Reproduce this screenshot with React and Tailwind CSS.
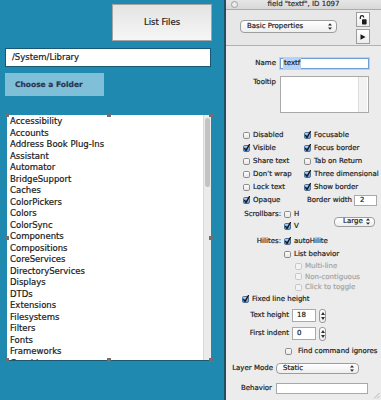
import React from "react";

const items = [
  "Accessibility", "Accounts", "Address Book Plug-Ins", "Assistant", "Automator",
  "BridgeSupport", "Caches", "ColorPickers", "Colors", "ColorSync", "Components",
  "Compositions", "CoreServices", "DirectoryServices", "Displays", "DTDs",
  "Extensions", "Filesystems", "Filters", "Fonts", "Frameworks", "Graphics",
];

function Box({ checked, disabled }) {
  if (checked)
    return (
      <svg width="7" height="7" viewBox="0 0 7 7" className="shrink-0 overflow-visible">
        <defs>
          <linearGradient id="cbg" x1="0" y1="0" x2="0" y2="1">
            <stop offset="0" stopColor="#c4dcf6" />
            <stop offset="1" stopColor="#4a8fdc" />
          </linearGradient>
        </defs>
        <rect x="0.5" y="0.5" width="6" height="6" rx="1.3" fill="url(#cbg)" stroke="#4d6f98" />
        <path d="M1.6 3.4 L3 5.4 L6.4 -0.3" fill="none" stroke="#141414" strokeWidth="1.4" strokeLinecap="round" strokeLinejoin="round" />
      </svg>
    );
  return (
    <svg width="7" height="7" viewBox="0 0 7 7" className="shrink-0">
      <defs>
        <linearGradient id="cbw" x1="0" y1="0" x2="0" y2="1">
          <stop offset="0" stopColor="#ffffff" />
          <stop offset="1" stopColor="#e4e4e4" />
        </linearGradient>
      </defs>
      <rect x="0.5" y="0.5" width="6" height="6" rx="1.3" fill={disabled ? "#f3f3f3" : "url(#cbw)"} stroke={disabled ? "#c8c8c8" : "#8c8c8c"} />
    </svg>
  );
}

function Check({ checked, disabled, label, gap = "gap-[3px]" }) {
  return (
    <div className={`flex items-center ${gap}`}>
      <Box checked={checked} disabled={disabled} />
      <span className={disabled ? "text-[#a6a6a6]" : "text-[#1c1c1c]"}>{label}</span>
    </div>
  );
}

function Arrows() {
  return (
    <svg width="4" height="7" viewBox="0 0 4 7" className="shrink-0">
      <path d="M0 2.6 L2 0.3 L4 2.6 Z" fill="#2a2a2a" />
      <path d="M0 4.4 L2 6.7 L4 4.4 Z" fill="#2a2a2a" />
    </svg>
  );
}

function Stepper() {
  return (
    <div className="w-[7px] h-[14px] rounded-[3px] border border-[#9a9a9a] bg-gradient-to-b from-white to-[#ececec] flex flex-col items-center justify-around py-[1px]">
      <svg width="4" height="3" viewBox="0 0 4 3"><path d="M0 3 L2 0 L4 3 Z" fill="#333" /></svg>
      <svg width="4" height="3" viewBox="0 0 4 3"><path d="M0 0 L2 3 L4 0 Z" fill="#333" /></svg>
    </div>
  );
}

function Handle({ className }) {
  return <div className={`absolute w-[4px] h-[4px] bg-[#707070] ${className}`} />;
}

export default function App() {
  return (
    <div className="w-[381px] h-[400px] flex overflow-hidden font-['DejaVu_Sans',sans-serif] [-webkit-text-stroke:0.2px_currentColor]">
      {/* Left panel */}
      <div className="w-[224px] h-full bg-[#2089b0] flex flex-col text-[8.5px] text-[#1a1a1a]">
        <div className="pt-[4px] pl-[112px]">
          <div className="w-[100px] h-[37px] border border-[#a4a4a4] bg-gradient-to-b from-[#e4e4e4] to-[#f6f6f6] flex items-center justify-center text-[#222]">
            List Files
          </div>
        </div>
        <div className="mt-[7px] ml-[5px] w-[206px] h-[19px] bg-white border border-[#195873] flex items-center pl-[6px]">
          /System/Library
        </div>
        <div className="mt-[6px] ml-[5px] w-[99px] h-[23px] bg-[#7fc0d8] flex items-center pl-[10px] font-bold text-[7.5px] text-[#2a3553]">
          Choose a Folder
        </div>
        <div className="relative mt-[19px] ml-[7px] w-[204px] h-[246px] bg-white border-b border-[#1d5870] flex">
          <div className="flex-1 overflow-hidden pl-[3px] pt-[1px] leading-[11.5px]">
            {items.map((t) => (
              <div key={t} className="whitespace-nowrap">{t}</div>
            ))}
          </div>
          <div className="w-[8px] h-full bg-[#ebebeb] border-l border-[#d9d9d9] flex justify-center pt-[3px]">
            <div className="w-[5px] h-[69px] rounded-[3px] bg-[#c3c3c3]" />
          </div>
          <Handle className="left-[-2px] top-[-2px]" />
          <Handle className="left-[100px] top-[-2px]" />
          <Handle className="right-[-2px] top-[-2px]" />
          <Handle className="left-[-2px] top-[121px]" />
          <Handle className="right-[-2px] top-[121px]" />
          <Handle className="left-[-2px] bottom-[-2px]" />
          <Handle className="left-[100px] bottom-[-2px]" />
          <Handle className="right-[-2px] bottom-[-2px]" />
        </div>
      </div>

      {/* Divider */}
      <div className="w-[2px] h-full bg-[#244f61]" />

      {/* Right panel */}
      <div className="relative flex-1 h-full bg-[#ececec] flex flex-col text-[7px] text-[#1c1c1c]">
        {/* Title bar */}
        <div className="h-[10px] bg-gradient-to-b from-[#e6e6e6] to-[#d8d8d8] border-b border-[#ababab] flex items-center relative">
          <div className="ml-[5px] w-[7px] h-[7px] rounded-full border border-[#a0a0a0] bg-[#ececec]" />
          <div className="absolute inset-x-0 top-0 h-[9px] flex items-center justify-center text-[#2e2e2e] leading-none">
            field "textf", ID 1097
          </div>
        </div>
        {/* Toolbar */}
        <div className="h-[36px] bg-[#e7e7e7] border-b border-[#b2b2b2] flex pl-[14px]">
          <div className="mt-[10px] w-[97px] h-[13px] rounded-[4px] border border-[#9d9d9d] bg-gradient-to-b from-white to-[#eeeeee] flex items-center pl-[6px] pr-[4px] justify-between">
            <span>Basic Properties</span>
            <Arrows />
          </div>
          <div className="ml-auto mr-[11px] flex flex-col gap-[2px] pt-[2px]">
            <div className="w-[14px] h-[15px] border border-[#9d9d9d] bg-gradient-to-b from-white to-[#ededed] flex items-center justify-center">
              <svg width="8" height="10" viewBox="0 0 8 10">
                <path d="M1.3 4 V2.4 A1.7 1.7 0 0 1 4.7 2.4" fill="none" stroke="#1a1a1a" strokeWidth="1.2" />
                <rect x="3" y="4.3" width="4.6" height="5.2" rx="0.8" fill="#1a1a1a" />
              </svg>
            </div>
            <div className="w-[14px] h-[15px] border border-[#9d9d9d] bg-gradient-to-b from-white to-[#ededed] flex items-center justify-center">
              <svg width="6" height="6" viewBox="0 0 6 6">
                <path d="M0.5 0.3 L5.6 3 L0.5 5.7 Z" fill="#1a1a1a" />
              </svg>
            </div>
          </div>
        </div>

        {/* Content */}
        <div className="flex flex-col">
          <div className="mt-[12px] h-[11px] flex items-center">
            <div className="w-[50px] text-right">Name</div>
            <div className="ml-[4px] w-[89px] h-[11px] bg-white border border-[#6f9ed8] shadow-[0_0_0_1px_#b9d3f1] flex items-center pl-[2px]">
              <span className="bg-[#b4d3fb] px-[1px]">textf</span>
            </div>
          </div>
          <div className="mt-[7px] h-[37px] flex items-start">
            <div className="w-[50px] text-right pt-[1px]">Tooltip</div>
            <div className="ml-[4px] w-[89px] h-[37px] bg-white border border-[#a9a9a9] flex justify-end">
              <div className="w-[9px] h-full bg-[#f2f2f2] border-l border-[#dedede] mr-[1px]" />
            </div>
          </div>

          <div className="mt-[16px] flex flex-col pl-[17px]">
            {[
              [["Disabled", false], ["Focusable", true]],
              [["Visible", true], ["Focus border", true]],
              [["Share text", false], ["Tab on Return", false]],
              [["Don’t wrap", false], ["Three dimensional", true]],
              [["Lock text", false], ["Show border", true]],
            ].map(([a, b]) => (
              <div key={a[0]} className="h-[13px] flex items-center">
                <div className="w-[61px]"><Check label={a[0]} checked={a[1]} /></div>
                <Check label={b[0]} checked={b[1]} />
              </div>
            ))}
            <div className="h-[13px] flex items-center">
              <div className="w-[64px]"><Check label="Opaque" checked /></div>
              <span>Border width</span>
              <div className="ml-[2px] w-[23px] h-[11px] bg-white border border-[#a9a9a9] flex items-center pl-[5px]">2</div>
            </div>
          </div>

          <div className="mt-[1.5px] flex">
            <div className="w-[108px] flex flex-col">
              <div className="h-[12px] flex items-center">
                <div className="w-[55px] text-right">Scrollbars:</div>
                <div className="ml-[3px]"><Check label="H" /></div>
              </div>
              <div className="h-[12px] flex items-center pl-[58px]">
                <Check label="V" checked />
              </div>
            </div>
            <div className="mt-[8px] w-[41px] h-[10px] rounded-[4px] border border-[#9d9d9d] bg-gradient-to-b from-white to-[#eeeeee] flex items-center pl-[8px] pr-[4px] justify-between">
              <span>Large</span>
              <Arrows />
            </div>
          </div>

          <div className="mt-[2.5px] h-[13px] flex items-center">
            <div className="w-[55px] text-right">Hilites:</div>
            <div className="ml-[3px]"><Check label="autoHilite" checked /></div>
          </div>
          <div className="h-[13px] flex items-center pl-[58px]">
            <Check label="List behavior" />
          </div>
          <div className="flex flex-col pl-[69px]">
            <div className="h-[10.5px] flex items-center"><Check label="Multi-line" disabled /></div>
            <div className="h-[10.5px] flex items-center"><Check label="Non-contiguous" disabled /></div>
            <div className="h-[10.5px] flex items-center"><Check label="Click to toggle" disabled /></div>
          </div>
          <div className="h-[13px] flex items-center pl-[16px]">
            <Check label="Fixed line height" checked />
          </div>

          <div className="mt-[3.5px] h-[13px] flex items-center">
            <div className="w-[63px] text-right">Text height</div>
            <div className="ml-[3px] w-[24px] h-[13px] bg-white border border-[#a9a9a9] flex items-center pl-[4px]">18</div>
            <div className="ml-[3px]"><Stepper /></div>
          </div>
          <div className="mt-[5px] h-[13px] flex items-center">
            <div className="w-[63px] text-right">First indent</div>
            <div className="ml-[3px] w-[24px] h-[13px] bg-white border border-[#a9a9a9] flex items-center pl-[4px]">0</div>
            <div className="ml-[3px]"><Stepper /></div>
          </div>

          <div className="mt-[5px] h-[12px] flex items-center pl-[59px]">
            <Check label="Find command ignores" gap="gap-[6px]" />
          </div>

          <div className="mt-[6px] h-[10px] flex items-center">
            <div className="w-[47px] text-right">Layer Mode</div>
            <div className="ml-[3px] w-[83px] h-[11px] rounded-[4px] border border-[#9d9d9d] bg-gradient-to-b from-white to-[#eeeeee] flex items-center pl-[6px] pr-[4px] justify-between">
              <span>Static</span>
              <Arrows />
            </div>
          </div>
          <div className="mt-[10px] h-[10px] flex items-center">
            <div className="w-[46px] text-right">Behavior</div>
            <div className="ml-[4px] w-[92px] h-[11px] bg-white border border-[#a9a9a9]" />
          </div>
        </div>

        <svg className="absolute right-[1px] bottom-[1px]" width="7" height="7" viewBox="0 0 7 7">
          <path d="M6.5 1 L1 6.5 M6.5 4 L4 6.5" stroke="#a8a8a8" strokeWidth="0.8" />
        </svg>
      </div>
    </div>
  );
}
